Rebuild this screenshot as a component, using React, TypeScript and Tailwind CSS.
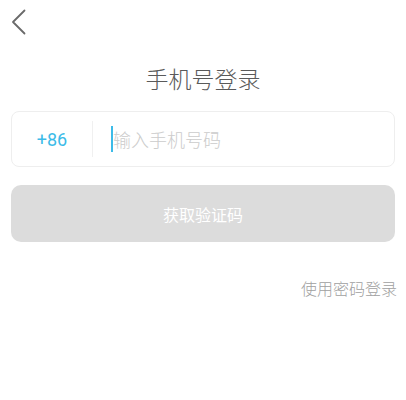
const FONT = { fontFamily: '"Noto Sans CJK SC", "Noto Sans", sans-serif' };

export default function App() {
  return (
    <div className="w-[406px] h-[400px] bg-white" style={FONT}>
      {/* Header */}
      <div className="h-[44px] pl-[11px] pt-[9px]">
        <svg width="16" height="26" viewBox="0 0 16 26" fill="none">
          <path
            d="M13.5 1.5 L2 13 L13.5 24.5"
            stroke="#6a6a6a"
            strokeWidth="1.8"
            strokeLinecap="round"
            strokeLinejoin="round"
          />
        </svg>
      </div>

      <h1 className="mt-[18px] text-center text-[23px] leading-[32px] font-light text-[#5a5a5a]">
        手机号登录
      </h1>

      <div className="px-[11px]">
        {/* Phone input */}
        <div className="mt-[17px] h-[56px] flex items-center rounded-lg border border-[#eeeeee]">
          <span className="w-[80px] text-center text-[18px] text-[#3cbbe8]" style={{ fontFamily: 'Roboto, "Noto Sans", sans-serif' }}>
            +86
          </span>
          <div className="w-px h-[36px] bg-[#f0f0f0]" />
          <div className="ml-[18px] w-[2px] h-[26px] bg-[#3cbbe8]" />
          <span className="text-[18px] font-light text-[#cccccc]">输入手机号码</span>
        </div>

        {/* Submit */}
        <button className="mt-[18px] w-full h-[57px] rounded-[10px] bg-[#dcdcdc] text-white text-[16px]">
          获取验证码
        </button>

        <div className="mt-[34px] -mr-[2px] flex justify-end">
          <span className="text-[16px] leading-[24px] font-light text-[#a0a0a0]">使用密码登录</span>
        </div>
      </div>
    </div>
  );
}
